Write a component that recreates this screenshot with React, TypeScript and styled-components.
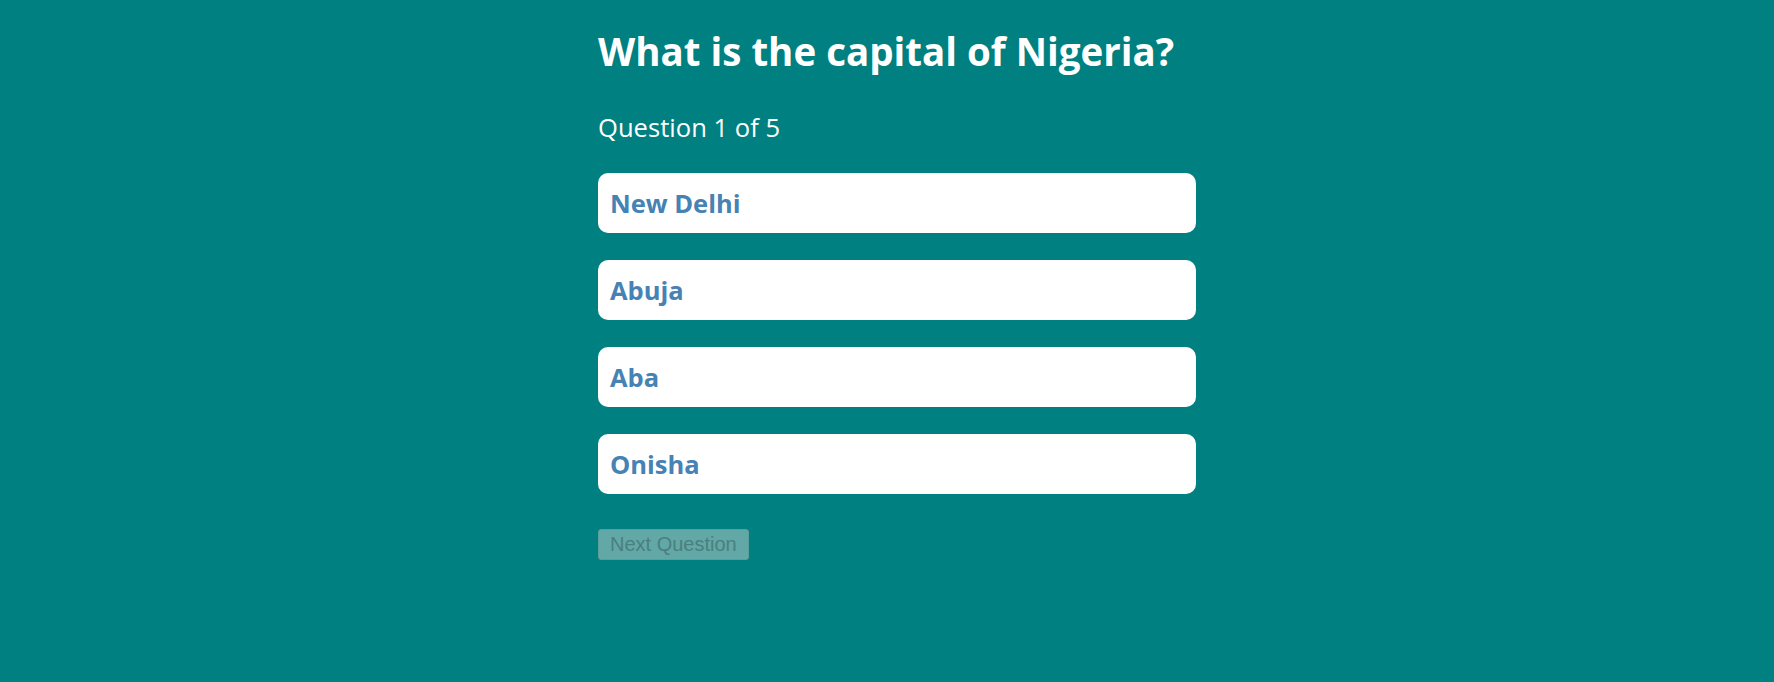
import React from 'react';
import styled, { createGlobalStyle } from 'styled-components';

const GlobalStyle = createGlobalStyle`
  html, body {
    margin: 0;
    padding: 0;
    background-color: #008080;
  }
  body {
    font-family: "Open Sans", "Noto Sans", sans-serif;
  }
`;

const answers = ['New Delhi', 'Abuja', 'Aba', 'Onisha'];

const App: React.FC = () => {
    return (
        <>
            <GlobalStyle />
            <Page>
                <Quiz>
                    <Title>What is the capital of Nigeria?</Title>
                    <Counter>Question 1 of 5</Counter>
                    <AnswerList>
                        {answers.map((a) => (
                            <AnswerButton key={a}>{a}</AnswerButton>
                        ))}
                    </AnswerList>
                    <NextButton disabled>Next Question</NextButton>
                </Quiz>
            </Page>
        </>
    );
};

export default App;

const Page = styled.div`
    display: flex;
    justify-content: center;
    min-height: 100vh;
    padding-left: 20px;
    box-sizing: border-box;
`;

const Quiz = styled.div`
    display: flex;
    flex-direction: column;
    align-items: flex-start;
    width: 598px;
    padding-top: 25px;
`;

const Title = styled.h1`
    margin: 0;
    color: white;
    font-size: 38.5px;
    line-height: 52px;
    font-weight: 700;
`;

const Counter = styled.p`
    margin: 35px 0 0;
    color: white;
    font-size: 25.6px;
    line-height: 32px;
`;

const AnswerList = styled.div`
    display: flex;
    flex-direction: column;
    gap: 27px;
    width: 100%;
    margin-top: 29px;
`;

const AnswerButton = styled.button`
    display: flex;
    align-items: center;
    width: 100%;
    height: 60px;
    padding: 0 12px;
    border: none;
    border-radius: 10px;
    background-color: white;
    color: #4682b4;
    font-family: "Open Sans", "Noto Sans", sans-serif;
    font-size: 25.5px;
    font-weight: 700;
    text-align: left;
    cursor: pointer;
`;

const NextButton = styled.button`
    margin-top: 35px;
    height: 31px;
    padding: 0 11px;
    border: 1px solid #5b9e9c;
    border-radius: 3px;
    background-color: #62a8a6;
    color: #4b7f7e;
    font-family: "Liberation Sans", Arial, sans-serif;
    font-size: 20px;
    line-height: 23px;
`;
